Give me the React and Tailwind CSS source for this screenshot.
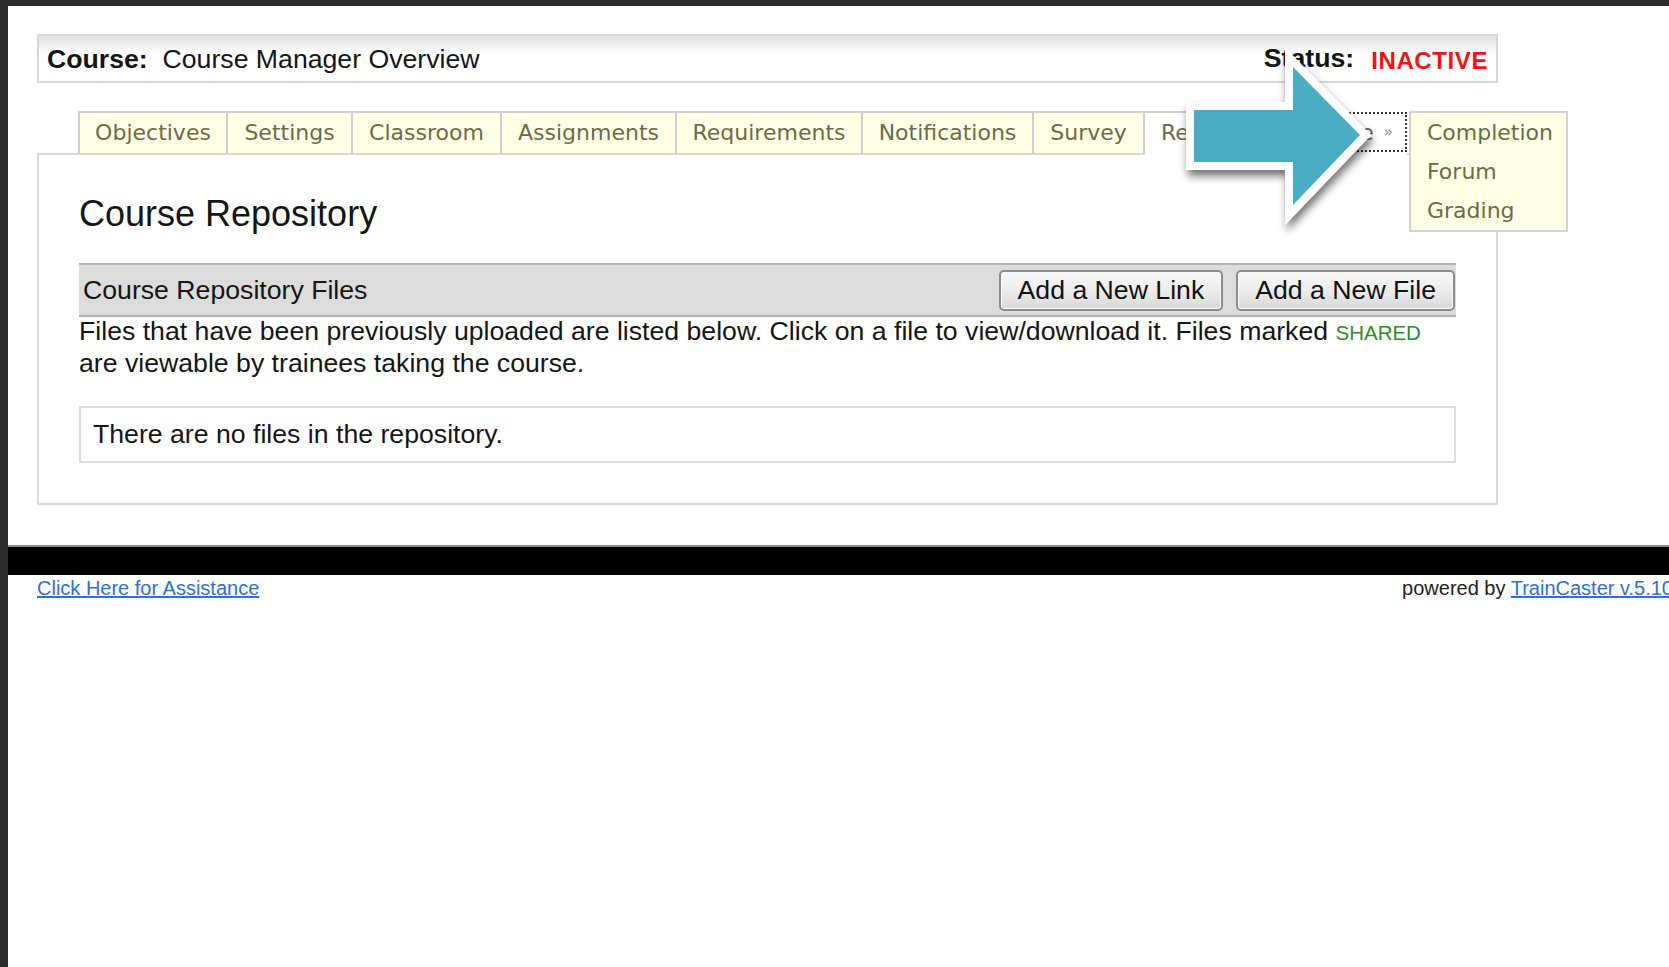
import React from "react";

const tabs = [
  { label: "Objectives", cls: "w-[150px] border-l-2" },
  { label: "Settings", cls: "w-[125px]" },
  { label: "Classroom", cls: "w-[149px]" },
  { label: "Assignments", cls: "w-[175px]" },
  { label: "Requirements", cls: "w-[186px]" },
  { label: "Notifications", cls: "w-[171px]" },
  { label: "Survey", cls: "w-[111px]" },
];

const moreTabs = ["Completion", "Forum", "Grading"];

function CalloutArrow() {
  return (
    <svg width="230" height="215" viewBox="0 0 230 215" className="overflow-visible">
      <defs>
        <filter id="calloutShadow" x="-30%" y="-30%" width="170%" height="170%">
          <feDropShadow dx="2" dy="6" stdDeviation="4" floodColor="#000" floodOpacity="0.55" />
        </filter>
      </defs>
      <polygon
        points="34,75 133,75 133,32 200,100 133,170 133,127 34,127"
        fill="#4aabc4"
        stroke="#fff"
        strokeWidth="16"
        paintOrder="stroke"
        filter="url(#calloutShadow)"
      />
    </svg>
  );
}

export default function App() {
  return (
    <div className="relative h-[967px] overflow-hidden border-t-[6px] border-l-[8px] border-[#2c2c2c] bg-white font-['Liberation_Sans',Arial,sans-serif] text-[#151515]">
      <div className="w-[1709px]">
        <div className="ml-[29px] w-[1461px] pt-[28px]">
          {/* Course title bar */}
          <div className="flex h-[49px] items-center justify-between border-2 border-[#d6d6d6] bg-linear-to-b from-[#e0e0e0] to-white to-40% px-[8px] text-[26.67px] leading-[30px]">
            <div>
              <span className="font-bold">Course:</span>&nbsp;&nbsp;Course Manager Overview
            </div>
            <div className="flex items-baseline">
              <span className="font-bold">Status:</span>
              <span className="ml-[17px] translate-y-[2px] text-[24px] font-bold tracking-[0.6px] text-[#f01414]">
                INACTIVE
              </span>
            </div>
          </div>

          {/* Tabs */}
          <div className="relative z-10 mt-[28px] -mb-[2px] ml-[41px] flex h-[44px] font-['DejaVu_Sans',Verdana,sans-serif] text-[22px] text-[#6b6b48]">
            {tabs.map((t) => (
              <div
                key={t.label}
                className={`flex h-full items-center justify-center border-t-2 border-r-2 border-b-2 border-[#cfcfcf] border-b-[#d8d8d8] bg-[#ffffe5] pb-[2px] ${t.cls}`}
              >
                {t.label}
              </div>
            ))}
            <div className="flex h-full w-[152px] items-center border-t-2 border-r-2 border-b-2 border-[#cfcfcf] border-b-white bg-white pb-[2px] pl-[16px]">
              Repository
            </div>
            <div className="relative h-full w-[110px] border-b-2 border-white bg-white">
              <div className="mt-px flex h-[40px] items-center justify-end border-2 border-dotted border-[#333] pr-[12px]">
                More <span className="ml-[10px] text-[15px] text-[#8a8a8a]">»</span>
              </div>
              <div className="absolute top-0 left-full ml-[2px] w-[159px] border-2 border-[#d2d2d2] bg-[#ffffe5] px-[16px] leading-[39px]">
                {moreTabs.map((m) => (
                  <div key={m}>{m}</div>
                ))}
              </div>
            </div>
          </div>

          {/* Repository panel */}
          <div className="border-2 border-[#dadada] px-[40px] pt-[39px] pb-[40px]">
            <h1 className="text-[36px] leading-[40px]">Course Repository</h1>

            <div className="mt-[29px] flex h-[54px] items-center justify-between border-y-2 border-[#b4b4b4] bg-[#dcdcdc] pr-[1px] pl-[4px] text-[26.67px] leading-[30px]">
              <span>Course Repository Files</span>
              <div className="flex gap-[13px]">
                <button className="h-[41px] rounded-[5px] border-2 border-[#8c8c8c] bg-linear-to-b from-[#f8f8f8] via-[#ececec] to-[#d8d8d8] px-[17px] text-[#111] shadow-[inset_0_0_0_1px_#fafafa]">
                  Add a New Link
                </button>
                <button className="h-[41px] rounded-[5px] border-2 border-[#8c8c8c] bg-linear-to-b from-[#f8f8f8] via-[#ececec] to-[#d8d8d8] px-[17px] text-[#111] shadow-[inset_0_0_0_1px_#fafafa]">
                  Add a New File
                </button>
              </div>
            </div>

            <p className="-mt-px text-[26.67px] leading-[30px]">
              Files that have been previously uploaded are listed below. Click on a file to view/download it. Files
              marked <span className="text-[20.5px] text-[#2e8b2e]">SHARED</span> are viewable by trainees taking the
              course.
            </p>

            <div className="mt-[28px] border-2 border-[#dcdcdc] px-[12px] pt-[11px] pb-[12px] text-[26.67px] leading-[30px]">
              There are no files in the repository.
            </div>
          </div>
        </div>

        {/* Footer */}
        <div className="mt-[40px] h-[30px] border-t-2 border-[#8a8a8a] bg-black" />
        <div className="flex justify-between pt-px pr-[44px] pl-[29px] text-[20px] leading-[24px]">
          <a href="#" className="text-[#2f6fd8] underline">
            Click Here for Assistance
          </a>
          <span className="text-[#222]">
            powered by{" "}
            <a href="#" className="text-[#2f6fd8] underline">
              TrainCaster v.5.10
            </a>
          </span>
        </div>
      </div>

      <div className="pointer-events-none absolute top-[29px] left-[1152px] z-20">
        <CalloutArrow />
      </div>
    </div>
  );
}
